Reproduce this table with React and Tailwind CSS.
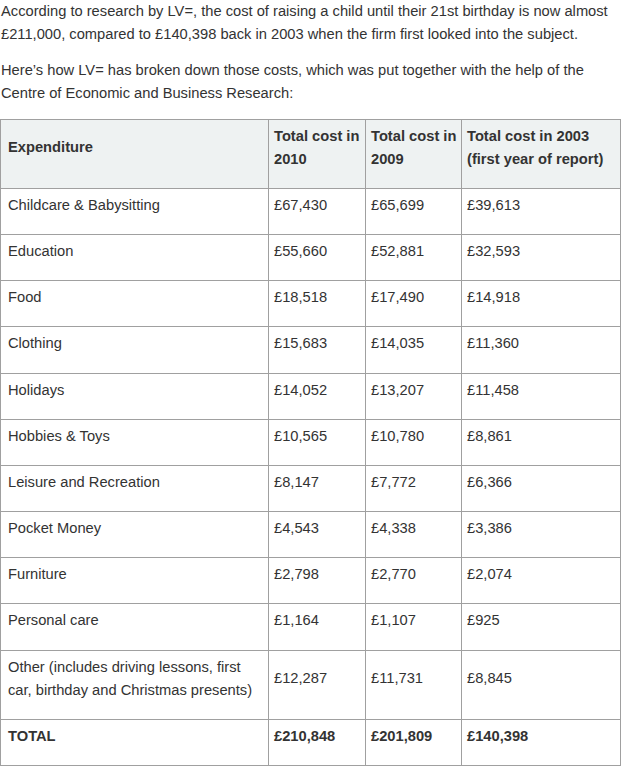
import React from "react";

const rows = [
  ["Childcare & Babysitting", "£67,430", "£65,699", "£39,613"],
  ["Education", "£55,660", "£52,881", "£32,593"],
  ["Food", "£18,518", "£17,490", "£14,918"],
  ["Clothing", "£15,683", "£14,035", "£11,360"],
  ["Holidays", "£14,052", "£13,207", "£11,458"],
  ["Hobbies & Toys", "£10,565", "£10,780", "£8,861"],
  ["Leisure and Recreation", "£8,147", "£7,772", "£6,366"],
  ["Pocket Money", "£4,543", "£4,338", "£3,386"],
  ["Furniture", "£2,798", "£2,770", "£2,074"],
  ["Personal care", "£1,164", "£1,107", "£925"],
  [
    "Other (includes driving lessons, first car, birthday and Christmas presents)",
    "£12,287",
    "£11,731",
    "£8,845",
  ],
];

const cell =
  "border border-[#a0a0a0] pr-[3px] pt-[5px] pb-[17px] align-middle text-left";
const first = cell + " pl-[7px]";
const rest = cell + " pl-[5px]";

function App() {
  return (
    <div className="w-[621px] bg-white text-[#333] text-[14.7px] leading-[23.15px] font-['Liberation_Sans',Arial,sans-serif]">
      <p className="mb-[13px] pl-[1px]">
        According to research by LV=, the cost of raising a child until their
        21st birthday is now almost £211,000, compared to £140,398 back in 2003
        when the firm first looked into the subject.
      </p>
      <p className="mb-[13px] pl-[1px]">
        Here’s how LV= has broken down those costs, which was put together with
        the help of the Centre of Economic and Business Research:
      </p>
      <table className="w-[621px] border-collapse">
        <thead>
          <tr className="bg-[#eef2f2] font-bold">
            <th className={first + " w-[268px]"}>Expenditure</th>
            <th className={rest + " w-[97px]"}>Total cost in 2010</th>
            <th className={rest + " w-[96px]"}>Total cost in 2009</th>
            <th className={rest}>Total cost in 2003 (first year of report)</th>
          </tr>
        </thead>
        <tbody>
          {rows.map((r) => (
            <tr key={r[0]}>
              {r.map((c, i) => (
                <td key={i} className={i === 0 ? first : rest}>
                  {c}
                </td>
              ))}
            </tr>
          ))}
          <tr className="font-bold">
            <td className={first}>TOTAL</td>
            <td className={rest}>£210,848</td>
            <td className={rest}>£201,809</td>
            <td className={rest}>£140,398</td>
          </tr>
        </tbody>
      </table>
    </div>
  );
}

export default App;
